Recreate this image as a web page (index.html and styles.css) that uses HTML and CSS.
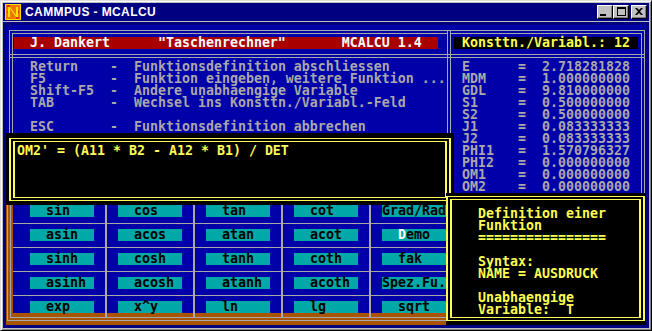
FILE: index.html
```html
<!DOCTYPE html>
<html lang="de">
<head>
    <meta charset="UTF-8">
    <meta name="viewport" content="width=device-width, initial-scale=1.0">
    <title>CAMMPUS - MCALCU</title>
    <link rel="stylesheet" href="styles.css">
</head>
<body>
    <div class="window">
        <div class="titlebar">
            <svg class="app-icon" width="16" height="16" viewBox="0 0 16 16">
                <rect x="0.5" y="0.5" width="15" height="15" fill="#f07800" stroke="#ffd800"/>
                <path d="M3 13V3h2l6 8V3h2v10h-2L5 5v8z" fill="#ffe000"/>
                <path d="M2 2h3M11 14h3M2 8h1M13 8h1" stroke="#c00000"/>
            </svg>
            <span class="title">CAMMPUS - MCALCU</span>
            <div class="caption-buttons">
                <span class="cap-btn"><i class="ico-min"></i></span>
                <span class="cap-btn"><i class="ico-max"></i></span>
                <span class="cap-btn cap-close">
                    <svg width="8" height="7" viewBox="0 0 8 7"><path d="M0 0h2l2 2 2-2h2L5 3.5 8 7H6L4 5 2 7H0l3-3.5z" fill="#000"/></svg>
                </span>
            </div>
        </div>
        <div class="client">
            <div class="screen">
                <div class="frame frame-left"></div>
                <div class="frame frame-right"></div>
                <div class="divider"></div>
                <div class="head-bar">  J. Dankert      "Taschenrechner"       MCALCU 1.4</div>
                <div class="count-bar"> Konsttn./Variabl.: 12</div>
<pre class="help">Return    -  Funktionsdefinition abschliessen
F5        -  Funktion eingeben, weitere Funktion ...
Shift-F5  -  Andere unabhaengige Variable
TAB       -  Wechsel ins Konsttn./Variabl.-Feld

ESC       -  Funktionsdefinition abbrechen</pre>
<pre class="vars">E      =  2.718281828
MDM    =  1.000000000
GDL    =  9.810000000
S1     =  0.500000000
S2     =  0.500000000
J1     =  0.083333333
J2     =  0.083333333
PHI1   =  1.570796327
PHI2   =  0.000000000
OM1    =  0.000000000
OM2    =  0.000000000</pre>

                <div class="keypad">
                    <div class="keypad-frame">
                        <div class="keys">
                            <span class="key">sin</span>
                            <span class="key">cos</span>
                            <span class="key">tan</span>
                            <span class="key">cot</span>
                            <span class="key wide">Grad/Rad</span>
                            <span class="key">asin</span>
                            <span class="key">acos</span>
                            <span class="key">atan</span>
                            <span class="key">acot</span>
                            <span class="key"><b class="hot">D</b>emo</span>
                            <span class="key">sinh</span>
                            <span class="key">cosh</span>
                            <span class="key">tanh</span>
                            <span class="key">coth</span>
                            <span class="key">fak</span>
                            <span class="key">asinh</span>
                            <span class="key">acosh</span>
                            <span class="key">atanh</span>
                            <span class="key">acoth</span>
                            <span class="key wide">Spez.Fu.</span>
                            <span class="key">exp</span>
                            <span class="key">x^y</span>
                            <span class="key">ln</span>
                            <span class="key">lg</span>
                            <span class="key">sqrt</span>
                        </div>
                    </div>
                </div>

                <div class="popup popup-formula">
                    <div class="popup-frame">
<pre class="formula">OM2' = (A11 * B2 - A12 * B1) / DET</pre>
                    </div>
                </div>

                <div class="popup popup-info">
                    <div class="popup-frame">
<pre class="info">Definition einer
Funktion
================

Syntax:
NAME = AUSDRUCK

Unabhaengige
Variable:  T</pre>
                    </div>
                </div>
            </div>
        </div>
    </div>
</body>
</html>
```

FILE: styles.css
```css
* {
    box-sizing: border-box;
}
body {
    margin: 0;
    background: #c0c0c0;
}
.window {
    width: 652px;
    height: 331px;
    background: #c0c0c0;
    border: 1px solid;
    border-color: #dfdfdf #000 #000 #dfdfdf;
    box-shadow: inset 1px 1px #fff, inset -1px -1px #808080;
    padding: 2px;
}
.titlebar {
    height: 18px;
    background: #000080;
    color: #fff;
    display: flex;
    align-items: center;
    padding: 0 2px 0 2px;
    font-family: "Liberation Sans", Arial, sans-serif;
    font-weight: bold;
    font-size: 12px;
    letter-spacing: 0.4px;
}
.app-icon {
    margin-right: 4px;
    flex: none;
}
.title {
    flex: 1;
}
.caption-buttons {
    display: flex;
    align-items: center;
}
.cap-btn {
    width: 16px;
    height: 14px;
    background: #c0c0c0;
    border: 1px solid;
    border-color: #fff #000 #000 #fff;
    box-shadow: inset -1px -1px #808080;
    display: flex;
    align-items: center;
    justify-content: center;
}
.cap-close {
    margin-left: 2px;
}
.ico-min {
    width: 6px;
    height: 2px;
    background: #000;
    margin: 6px 4px 0 0;
}
.ico-max {
    width: 9px;
    height: 9px;
    border: 1px solid #000;
    border-top-width: 2px;
    margin-bottom: 1px;
}
.cap-close svg {
    margin-bottom: 1px;
}

/* DOS text screen: 80 x 25 cells of 8 x 12 px */
.client {
    margin-top: 1px;
    padding: 3px 0 0 3px;
    background: #000080;
    height: 306px;
}
.screen {
    display: grid;
    grid-template-columns: repeat(80, 8px);
    grid-template-rows: repeat(25, 12px);
    width: 640px;
    height: 300px;
    background: #0000a8;
    color: #a8a8a8;
    font-family: "DejaVu Sans Mono", "Liberation Mono", monospace;
    font-weight: bold;
    font-size: 13.29px;
    line-height: 12px;
}
.screen pre {
    margin: 0;
    font: inherit;
    white-space: pre;
}
.frame {
    border: 4px double #a8a8a8;
    border-bottom: none;
}
.frame-left {
    grid-column: 1 / 57;
    grid-row: 1 / 11;
    margin: 5px 3px 0 3px;
}
.frame-right {
    grid-column: 56 / 81;
    grid-row: 1 / 16;
    margin: 5px 1px 0 1px;
}
.divider {
    grid-column: 1 / 81;
    grid-row: 3;
    margin: 5px 1px 0 3px;
    height: 4px;
    border-top: 1px solid #a8a8a8;
    border-bottom: 1px solid #a8a8a8;
}
.head-bar {
    grid-column: 2 / 55;
    grid-row: 2;
    background: #a80000;
    color: #fcfcfc;
    white-space: pre;
}
.count-bar {
    grid-column: 57 / 80;
    grid-row: 2;
    background: #000;
    color: #fcfc54;
    white-space: pre;
}
.help {
    grid-column: 4 / 56;
    grid-row: 4 / 10;
}
.vars {
    grid-column: 58 / 80;
    grid-row: 4 / 15;
}

/* function keys */
.keypad {
    grid-column: 1 / 56;
    grid-row: 15 / 26;
    background: #a85400;
    padding: 0 0 4px 1px;
}
.keypad-frame {
    height: 100%;
    border-left: 4px double #a8a8a8;
    border-bottom: 4px double #a8a8a8;
    padding-left: 2px;
}
.keys {
    height: 100%;
    display: grid;
    grid-template-columns: repeat(5, 64px);
    grid-auto-rows: 12px;
    column-gap: 24px;
    row-gap: 12px;
    padding: 12px 0 0 17px;
    background:
        linear-gradient(#a8a8a8, #a8a8a8) 92px 0 / 2px 100% no-repeat,
        linear-gradient(#a8a8a8, #a8a8a8) 180px 0 / 2px 100% no-repeat,
        linear-gradient(#a8a8a8, #a8a8a8) 268px 0 / 2px 100% no-repeat,
        linear-gradient(#a8a8a8, #a8a8a8) 356px 0 / 2px 100% no-repeat,
        linear-gradient(#a8a8a8, #a8a8a8) 0 30px / 100% 1px no-repeat,
        linear-gradient(#a8a8a8, #a8a8a8) 0 54px / 100% 1px no-repeat,
        linear-gradient(#a8a8a8, #a8a8a8) 0 78px / 100% 1px no-repeat,
        linear-gradient(#a8a8a8, #a8a8a8) 0 102px / 100% 1px no-repeat,
        linear-gradient(#a85400, #a85400) 0 100% / 100% 4px no-repeat,
        #0000a8;
}
.key {
    background: #00a8a8;
    color: #000;
    padding-left: 16px;
    white-space: pre;
}
.key.wide {
    padding-left: 0;
}
.hot {
    color: #fcfcfc;
    font-weight: bold;
}

/* popup windows: black with yellow double frame */
.popup {
    background: #000;
    color: #fcfc54;
}
.popup-frame {
    height: 100%;
    border-style: double;
    border-color: #fcfc54;
    border-width: 4px 6px;
}
.popup-formula {
    grid-column: 1 / 57;
    grid-row: 10 / 16;
    padding: 5px 3px 4px 3px;
}
.popup-info {
    grid-column: 56 / 81;
    grid-row: 15 / 26;
    padding: 3px 1px 4px 0;
}
.formula {
    padding: 3px 0 0 2px;
}
.info {
    padding: 8px 0 0 26px;
}
```
